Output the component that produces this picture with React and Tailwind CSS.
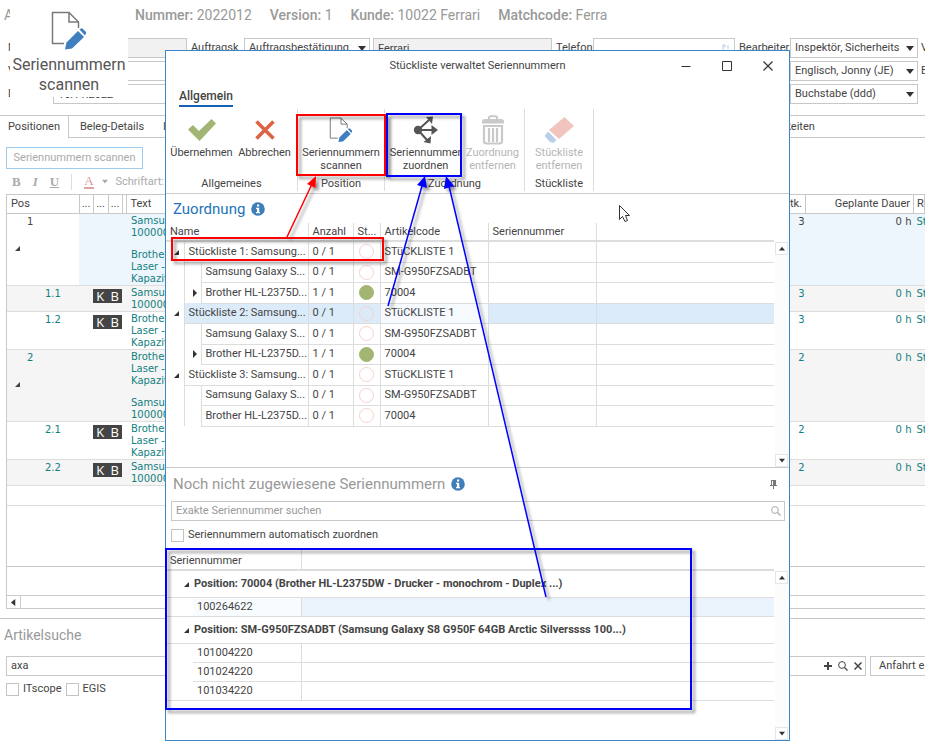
import React from 'react';
import clsx from 'clsx';

const positions = [
    { pos: '1', group: true, active: true, qty: '3', text: [['Samsung', '1000002'], ['Brother', 'Laser - A4', 'Kapazität']] },
    { pos: '1.1', qty: '3', shaded: true, text: [['Samsung', '1000002']] },
    { pos: '1.2', qty: '3', text: [['Brother', 'Laser - A4', 'Kapazität']] },
    { pos: '2', group: true, shaded: true, qty: '2', text: [['Brother', 'Laser - A4', 'Kapazität'], ['Samsung', '1000002']] },
    { pos: '2.1', qty: '2', text: [['Brother', 'Laser - A4', 'Kapazität']] },
    { pos: '2.2', qty: '2', shaded: true, text: [['Samsung', '1000002']] },
];

const assignments = [
    { name: 'Stückliste 1: Samsung...', level: 0, count: '0 / 1', code: 'STüCKLISTE 1' },
    { name: 'Samsung Galaxy S...', level: 1, count: '0 / 1', code: 'SM-G950FZSADBT' },
    { name: 'Brother HL-L2375D...', level: 1, count: '1 / 1', code: '70004', done: true },
    { name: 'Stückliste 2: Samsung...', level: 0, count: '0 / 1', code: 'STüCKLISTE 1', selected: true },
    { name: 'Samsung Galaxy S...', level: 1, count: '0 / 1', code: 'SM-G950FZSADBT' },
    { name: 'Brother HL-L2375D...', level: 1, count: '1 / 1', code: '70004', done: true },
    { name: 'Stückliste 3: Samsung...', level: 0, count: '0 / 1', code: 'STüCKLISTE 1' },
    { name: 'Samsung Galaxy S...', level: 1, count: '0 / 1', code: 'SM-G950FZSADBT' },
    { name: 'Brother HL-L2375D...', level: 1, count: '0 / 1', code: '70004' },
];

const serialGroups = [
    { title: 'Position: 70004 (Brother HL-L2375DW - Drucker - monochrom - Duplex ...)', serials: ['100264622'] },
    { title: 'Position: SM-G950FZSADBT (Samsung Galaxy S8 G950F 64GB Arctic Silverssss 100...)', serials: ['101004220', '101024220', '101034220'] },
];

/* ---------- icons ---------- */

function DocEditIcon({ className }) {
    return (
        <svg viewBox="0 0 36 40" className={className} fill="none">
            <path d="M13 32.500H1.500V1.500H18L27.500 11V17" stroke="#7a7a7a" strokeWidth="1.500" />
            <path d="M18 1.500V11H27.500" stroke="#7a7a7a" strokeWidth="1.500" />
            <path d="M14 38.500L15.500 31.500L27 20L33 26L21 37.500Z" fill="#3f7fbf" />
            <path d="M28.500 18.500L30 17.500Q31 17 32 18L34.500 20.500Q35.500 21.500 35 22.500L34 24.500Z" fill="#3f7fbf" />
        </svg>
    );
}

function CheckMark() {
    return (
        <svg viewBox="0 0 28 22" className="w-7 h-[22px]">
            <path d="M0 10.500L5 6L11 12L23.500 0L28 4.500L11.500 22Z" fill="#a3b572" />
        </svg>
    );
}

function CrossMark() {
    return (
        <svg viewBox="0 0 20 20" className="w-5 h-5">
            <path d="M1.500 1.500L18.500 18.500M18.500 1.500L1.500 18.500" stroke="#dc6344" strokeWidth="3.600" />
        </svg>
    );
}

function AssignIcon() {
    return (
        <svg viewBox="0 0 26 28" className="w-[26px] h-7" stroke="#555" fill="#555">
            <circle cx="5" cy="14" r="4.200" stroke="none" />
            <path d="M5 14L16 4M5 14H20M5 14L14 24" strokeWidth="2" />
            <path d="M13 1L20 0.500L19 8Z M18.500 9L25 14L18.500 19Z M18 20L17.500 27.500L10.500 26Z" stroke="none" />
        </svg>
    );
}

function TrashIcon() {
    return (
        <svg viewBox="0 0 24 30" className="w-6 h-[30px]" fill="none" stroke="#c9c9c9">
            <path d="M8 4V2.500Q8 1.200 9.500 1.200H14.500Q16 1.200 16 2.500V4" strokeWidth="2" />
            <path d="M1 8.500V6.500Q1 4 4 4H20Q23 4 23 6.500V8.500Z" fill="#c9c9c9" stroke="none" />
            <path d="M3 11V26Q3 28.500 5.500 28.500H18.500Q21 28.500 21 26V11Z" strokeWidth="2.200" />
            <path d="M8 13V27M12 13V27M16 13V27" strokeWidth="2.200" />
        </svg>
    );
}

function EraserIcon() {
    return (
        <svg viewBox="0 0 30 26" className="w-[30px] h-[26px]">
            <path d="M20.500 0L30 9L15 22L5 13Z" fill="#f1c5bd" />
            <path d="M4 14.500L12.500 23L9.500 26L6 25L0.500 19Z" fill="#b9d0ea" />
        </svg>
    );
}

function InfoIcon() {
    return (
        <svg viewBox="0 0 14 14" className="w-[14px] h-[14px]">
            <circle cx="7" cy="7" r="6.800" fill="#3f7fb9" />
            <path d="M6 2.500H8.200V4.500H6ZM5 5.700H8.200V10H9V11.200H5V10H6V6.900H5Z" fill="#fff" />
        </svg>
    );
}

function SearchIcon({ className }) {
    return (
        <svg viewBox="0 0 10 10" className={clsx('w-[10px] h-[10px]', className)} fill="none" stroke="currentColor">
            <circle cx="4" cy="4" r="3.400" />
            <path d="M6.500 6.500L9.500 9.500" strokeWidth="1.300" />
        </svg>
    );
}

function PhoneIcon() {
    return (
        <svg viewBox="0 0 8 9" className="w-2 h-[9px]" fill="none" stroke="#b9cbe3">
            <path d="M1 1V5Q1.500 8 4 8.500M1 1H3V3.500M5 2H7M5 4H7" />
        </svg>
    );
}

function PinIcon() {
    return (
        <svg viewBox="0 0 7 9" className="w-[7px] h-[9px]">
            <path d="M1 0H6V5H7V6H4V9H3V6H0V5H1Z" fill="#777" />
            <path d="M2 1H3V5H2Z" fill="#fff" />
        </svg>
    );
}

function Triangle({ dir, className }) {
    const shapes = {
        down: 'M0 1H8L4 6Z',
        up: 'M0 6H8L4 1Z',
        left: 'M6 0V8L1 4Z',
        right: 'M2 0V8L6 4Z',
        open: 'M7 2V7H2Z',
    };
    return (
        <svg viewBox="0 0 8 8" className={clsx('w-2 h-2', className)}>
            <path d={shapes[dir]} fill="currentColor" />
        </svg>
    );
}

/* ---------- shared controls ---------- */

function Dropdown({ label, value, className }) {
    return (
        <div className={clsx('relative shrink-0', className)}>
            <select aria-label={label} className="appearance-none w-full h-5 pl-1 pr-4 border border-[#c8c8c8] bg-white">
                <option>{value}</option>
            </select>
            <Triangle dir="down" className="absolute right-[4px] top-[7px] text-[#333] pointer-events-none" />
        </div>
    );
}

function Checkbox({ id, label }) {
    return (
        <div className="flex items-center gap-1">
            <input id={id} type="checkbox" className="appearance-none w-[13px] h-[13px] border border-[#c4c4c4] bg-white" />
            <label htmlFor={id}>{label}</label>
        </div>
    );
}

function ScrollBar() {
    return (
        <div className="w-[13px] shrink-0 flex flex-col justify-between bg-[#fcfcfc]">
            <button aria-label="Nach oben" className="h-[13px] flex items-center justify-center border border-[#e6e6e6] bg-white text-[#333]">
                <Triangle dir="up" className="w-[6px] h-[6px]" />
            </button>
            <button aria-label="Nach unten" className="h-[13px] flex items-center justify-center border border-[#e6e6e6] bg-white text-[#333]">
                <Triangle dir="down" className="w-[6px] h-[6px]" />
            </button>
        </div>
    );
}

/* ---------- document window in the background ---------- */

function DocumentHeader() {
    const facts = [
        ['Nummer:', '2022012'],
        ['Version:', '1'],
        ['Kunde:', '10022 Ferrari'],
        ['Matchcode:', 'Ferra'],
    ];
    return (
        <header className="h-[38px] pt-1 pl-1 flex text-[14px] leading-[22px] text-[#999] whitespace-nowrap">
            <h1 className="w-[131px]">A</h1>
            <div className="flex gap-[18px]">
                {facts.map(([name, value]) => (
                    <span key={name}><b className="font-medium">{name}</b> {value}</span>
                ))}
            </div>
        </header>
    );
}

function DocumentForm() {
    const field = 'h-5 px-1 border border-[#c8c8c8] min-w-0';
    return (
        <form className="h-[78px] pl-2 flex flex-col gap-[3px] border-b border-[#c8c8c8] whitespace-nowrap">
            <div className="flex items-center">
                <label htmlFor="number" className="w-[45px]">Nr.</label>
                <input id="number" readOnly className={clsx(field, 'w-[134px] bg-[#f1f1f1]')} />
                <span className="w-[53px] ml-1">Auftragsk.</span>
                <Dropdown label="Auftragsklasse" value="Auftragsbestätigung" className="w-[126px]" />
                <input aria-label="Kunde" readOnly defaultValue="Ferrari" className={clsx(field, 'flex-1 ml-[3px] bg-[#f1f1f1]')} />
                <label htmlFor="phone" className="w-[37px] ml-1">Telefon</label>
                <div className={clsx(field, 'w-[142px] flex items-center')}>
                    <input id="phone" className="flex-1 min-w-0" />
                    <PhoneIcon />
                </div>
                <span className="w-[51px] ml-1">Bearbeiter</span>
                <Dropdown label="Bearbeiter" value="Inspektör, Sicherheits (" className="w-[128px]" />
                <span className="w-[4px] ml-[3px]">V</span>
            </div>
            <div className="flex items-center">
                <label htmlFor="variant" className="w-[45px]">Von</label>
                <input id="variant" className={clsx(field, 'flex-1')} />
                <Dropdown label="Vertreter" value="Englisch, Jonny (JE)" className="w-[128px] ml-[60px]" />
                <span className="w-[4px] ml-[3px]">E</span>
            </div>
            <div className="flex items-center">
                <label htmlFor="date" className="w-[45px]">Datum</label>
                <input id="date" defaultValue="15.11.2022" className={clsx(field, 'flex-1')} />
                <Dropdown label="Gruppe" value="Buchstabe (ddd)" className="w-[128px] ml-[60px] mr-[7px]" />
            </div>
        </form>
    );
}

function DocumentTabs() {
    return (
        <nav className="h-[22px] flex">
            <button className="w-[68px] pl-2 text-left">Positionen</button>
            <button className="w-[87px] pl-[11px] border-l border-b border-[#c8c8c8] text-left">Beleg-Details</button>
            <button className="flex-1 pl-2 border-b border-[#c8c8c8] text-left">Infos</button>
            <button className="w-[165px] pl-px border-b border-[#c8c8c8] text-left">Tätigkeiten</button>
        </nav>
    );
}

function FormatBar() {
    return (
        <div className="h-[25px] pl-3 flex items-center gap-3 text-[#aaa]">
            <button className="font-[Liberation_Serif,serif] text-[13px] font-bold">B</button>
            <button className="font-[Liberation_Serif,serif] text-[13px] font-bold italic">I</button>
            <button className="font-[Liberation_Serif,serif] text-[13px] font-bold underline">U</button>
            <span className="w-px h-4 bg-[#ddd]" />
            <button className="flex items-center gap-2">
                <span className="font-[Liberation_Serif,serif] text-[13px] leading-[12px] border-b-2 border-[#e0a3a3] text-[#d99]">A</span>
                <Triangle dir="down" className="w-[6px] h-[6px]" />
            </button>
            <label htmlFor="font" className="-ml-1">Schriftart:</label>
            <input id="font" className="-ml-2 h-5 w-40 border border-[#ddd]" />
        </div>
    );
}

function PositionsTable() {
    const head = 'h-[18px] border-r border-[#c8c8c8] font-normal overflow-hidden whitespace-nowrap';
    return (
        <table className="w-full table-fixed border-collapse">
            <colgroup>
                <col className="w-[72px]" />
                <col className="w-[14px]" />
                <col className="w-[15px]" />
                <col className="w-[14px]" />
                <col className="w-[4px]" />
                <col />
                <col className="w-[60px]" />
                <col className="w-[108px]" />
                <col className="w-[11px]" />
            </colgroup>
            <thead>
                <tr className="border-b border-[#c8c8c8]">
                    <th className={clsx(head, 'pl-1 text-left')}>Pos</th>
                    <th className={head}>...</th>
                    <th className={head}>...</th>
                    <th className={head}>...</th>
                    <th className={head} />
                    <th className={clsx(head, 'pl-1 text-left')}>Text</th>
                    <th className={clsx(head, 'pr-[3px] text-right')}>Stk.</th>
                    <th className={clsx(head, 'pr-[3px] text-right')}>Geplante Dauer</th>
                    <th className={clsx(head, 'pl-[3px] text-left')}>Re</th>
                </tr>
            </thead>
            <tbody className="font-[DejaVu_Sans,sans-serif] text-[10px] leading-[12px] text-[#128080]">
                {positions.map((row) => {
                    const tint = row.active ? 'bg-[#eef6fd]' : '';
                    return (
                        <tr key={row.pos} className={clsx('border-b border-[#ddd] align-top', row.shaded && 'bg-[#f5f5f5]')}>
                            <td className={clsx('pt-[2px]', row.group ? 'pl-5' : 'pl-[38px]', row.active && 'text-[#444]')}>
                                {row.pos}
                                {row.group && <Triangle dir="open" className="-ml-[14px] mt-4 text-[#444]" />}
                            </td>
                            <td className={tint} />
                            <td className={tint} colSpan={3}>
                                {!row.group && (
                                    <span className="flex justify-around w-[29px] h-[14px] mt-[3px] bg-[#444] text-white text-[13px] leading-[14px] font-[Open_Sans,sans-serif]">
                                        <span>K</span><span>B</span>
                                    </span>
                                )}
                            </td>
                            <td className={clsx(tint, 'pt-px pl-[5px] overflow-hidden whitespace-nowrap')}>
                                {row.text.map((lines, i) => (
                                    <div key={i} className="not-first:mt-[10px]">
                                        {lines.map((line) => <div key={line}>{line}</div>)}
                                    </div>
                                ))}
                            </td>
                            <td className={clsx(tint, 'pt-[2px] pr-px text-right', row.active && 'text-[#444]')}>{row.qty}</td>
                            <td className={clsx(tint, 'pt-[2px] pr-[2px] text-right', row.active && 'text-[#444]')}>0 h</td>
                            <td className={clsx(tint, 'pt-[2px] pl-[3px] overflow-hidden')}>St</td>
                        </tr>
                    );
                })}
                <tr className="h-5 border-b border-[#ddd]"><td colSpan={9} /></tr>
            </tbody>
        </table>
    );
}

function ArticleSearch() {
    return (
        <section className="mt-[9px] border-t border-[#c8c8c8] whitespace-nowrap">
            <h2 className="pl-1 pt-[5px] pb-[10px] text-[14px] leading-[22px] text-[#999]">Artikelsuche</h2>
            <div className="pl-[6px] flex gap-1">
                <div className="flex-1 h-5 flex items-center gap-[6px] pr-[3px] border border-[#c8c8c8] text-[#444]">
                    <input aria-label="Artikelsuche" defaultValue="axa" className="flex-1 min-w-0 pl-1 outline-none" />
                    <button aria-label="Hinzufügen">
                        <svg viewBox="0 0 8 8" className="w-2 h-2"><path d="M4 0V8M0 4H8" stroke="currentColor" strokeWidth="2" /></svg>
                    </button>
                    <button aria-label="Suchen"><SearchIcon /></button>
                    <button aria-label="Leeren">
                        <svg viewBox="0 0 8 8" className="w-2 h-2"><path d="M0.500 0.500L7.500 7.500M7.500 0.500L0.500 7.500" stroke="currentColor" strokeWidth="1.500" /></svg>
                    </button>
                </div>
                <button className="w-[55px] h-5 pl-2 border border-r-0 border-[#c8c8c8] text-left overflow-hidden">Anfahrt e</button>
            </div>
            <div className="pl-[6px] pt-[6px] flex gap-1">
                <Checkbox id="itscope" label="ITscope" />
                <Checkbox id="egis" label="EGIS" />
            </div>
        </section>
    );
}

/* ---------- dialog ---------- */

function RibbonButton({ icon, lines, disabled, className }) {
    return (
        <button disabled={disabled} className={clsx('flex flex-col items-center whitespace-nowrap', disabled && 'text-[#b5b5b5]', className)}>
            <span className="h-8 flex items-center">{icon}</span>
            {lines.map((line) => <span key={line} className="leading-[13px]">{line}</span>)}
        </button>
    );
}

function RibbonGroup({ title, children, className }) {
    return (
        <div className={clsx('flex flex-col items-center justify-between border-r border-[#ddd]', className)}>
            <div className="flex pt-[5px]">{children}</div>
            <span className="leading-[14px]">{title}</span>
        </div>
    );
}

function Ribbon() {
    return (
        <div className="h-[87px] pt-[2px] pb-[2px] border-b border-[#ccc] flex">
            <RibbonGroup title="Allgemeines" className="w-[132px]">
                <RibbonButton icon={<CheckMark />} lines={['Übernehmen']} className="w-[66px]" />
                <RibbonButton icon={<CrossMark />} lines={['Abbrechen']} className="w-[60px]" />
            </RibbonGroup>
            <RibbonGroup title="Position" className="w-[87px]">
                <RibbonButton icon={<DocEditIcon className="w-6 h-[26px]" />} lines={['Seriennummern', 'scannen']} />
            </RibbonGroup>
            <RibbonGroup title="Zuordnung" className="w-[140px]">
                <RibbonButton icon={<AssignIcon />} lines={['Seriennummer', 'zuordnen']} className="w-[76px]" />
                <RibbonButton icon={<TrashIcon />} lines={['Zuordnung', 'entfernen']} disabled className="w-[58px]" />
            </RibbonGroup>
            <RibbonGroup title="Stückliste" className="w-[69px]">
                <RibbonButton icon={<EraserIcon />} lines={['Stückliste', 'entfernen']} disabled />
            </RibbonGroup>
        </div>
    );
}

function AssignmentTable() {
    const line = 'border-r border-[#ddd]';
    return (
        <table className="w-full table-fixed border-collapse whitespace-nowrap">
            <colgroup>
                <col className="w-[18px]" />
                <col className="w-[17px]" />
                <col className="w-[107px]" />
                <col className="w-[45px]" />
                <col className="w-[27px]" />
                <col className="w-[108px]" />
                <col className="w-[108px]" />
                <col />
            </colgroup>
            <thead>
                <tr className="h-[18px] border-b-2 border-[#ddd] text-left">
                    <th colSpan={3} className={clsx(line, 'pl-1 font-normal')}>Name</th>
                    <th className={clsx(line, 'pl-1 font-normal')}>Anzahl</th>
                    <th className={clsx(line, 'pl-1 font-normal')}>St...</th>
                    <th className={clsx(line, 'pl-1 font-normal')}>Artikelcode</th>
                    <th className={clsx(line, 'pl-1 font-normal')}>Seriennummer</th>
                    <th />
                </tr>
            </thead>
            <tbody>
                {assignments.map((row, i) => {
                    const cell = clsx(line, 'border-b pl-1', row.selected && 'bg-[#dcebf9]');
                    return (
                        <tr key={i} className="odd:h-[21px] even:h-5">
                            <td className="border-r border-[#ddd]">
                                {row.level === 0 && <Triangle dir="open" className="ml-[6px] text-[#333]" />}
                            </td>
                            {row.level === 1 && (
                                <td className="border-r border-[#ddd]">
                                    {row.done && <Triangle dir="right" className="ml-[6px] text-[#333]" />}
                                </td>
                            )}
                            <td colSpan={row.level === 0 ? 2 : 1} className={cell}>{row.name}</td>
                            <td className={cell}>{row.count}</td>
                            <td className={clsx(line, 'border-b', row.selected && 'bg-[#dcebf9]')}>
                                <span className={clsx('block mx-auto w-[15px] h-[15px] rounded-full border', row.done ? 'bg-[#a3b572] border-[#a3b572]' : 'border-[#f3d3cc]')} />
                            </td>
                            <td className={clsx(line, 'border-b pl-1', row.selected && 'bg-[#f6fafe]')}>{row.code}</td>
                            <td className={cell} />
                            <td className={clsx('border-b border-[#ddd]', row.selected && 'bg-[#dcebf9]')} />
                        </tr>
                    );
                })}
            </tbody>
        </table>
    );
}

function SerialTable() {
    return (
        <table className="w-full table-fixed border-collapse whitespace-nowrap">
            <colgroup>
                <col className="w-[27px]" />
                <col className="w-[108px]" />
                <col />
            </colgroup>
            <thead>
                <tr className="h-[21px] border-b-2 border-[#ddd] text-left">
                    <th colSpan={2} className="pl-1 pt-1 font-normal border-r border-[#ddd]">Seriennummer</th>
                    <th />
                </tr>
            </thead>
            {serialGroups.map((group, g) => (
                <tbody key={group.title}>
                    <tr className="h-[27px] border-b border-[#ddd]">
                        <th colSpan={3} className="pl-4 text-left font-bold">
                            <span className="flex items-center gap-1"><Triangle dir="open" className="text-[#333]" />{group.title}</span>
                        </th>
                    </tr>
                    {group.serials.map((serial) => (
                        <tr key={serial} className="h-[19px] last:border-b border-[#ddd]">
                            <td />
                            <td className={clsx('pl-1 border-r border-b border-[#ddd]', g === 0 && 'bg-[#f8fcff]')}>{serial}</td>
                            <td className={clsx('border-b border-[#ddd]', g === 0 && 'bg-[#ebf4fd]')} />
                        </tr>
                    ))}
                </tbody>
            ))}
        </table>
    );
}

function SerialDialog() {
    return (
        <div role="dialog" aria-labelledby="dialog-title" className="absolute left-[165px] right-[135px] top-[50px] bg-white border border-[#3a87c8] flex flex-col">
            <div className="h-[30px] grid grid-cols-[1fr_auto_1fr] items-center">
                <h2 id="dialog-title" className="col-start-2">Stückliste verwaltet Seriennummern</h2>
                <div className="flex justify-end gap-[31px] pr-4 text-[#333]">
                    <button aria-label="Minimieren">
                        <svg viewBox="0 0 10 10" className="w-[10px] h-[10px]"><path d="M0.500 5.500H9.500" stroke="currentColor" /></svg>
                    </button>
                    <button aria-label="Maximieren">
                        <svg viewBox="0 0 10 10" className="w-[10px] h-[10px]"><path d="M0.500 0.500H9.500V9.500H0.500Z" stroke="currentColor" fill="none" /></svg>
                    </button>
                    <button aria-label="Schließen">
                        <svg viewBox="0 0 10 10" className="w-[10px] h-[10px]"><path d="M0.500 0.500L9.500 9.500M9.500 0.500L0.500 9.500" stroke="currentColor" strokeWidth="1.200" /></svg>
                    </button>
                </div>
            </div>

            <div className="h-[26px] pl-[13px] flex items-end">
                <button className="h-5 border-b-2 border-[#1461b5] text-[12px] font-medium">Allgemein</button>
            </div>

            <Ribbon />

            <section className="h-[274px] border-b border-[#ccc] flex flex-col">
                <h3 className="h-[29px] pl-[7px] flex items-center gap-[6px] text-[15px] text-[#2273b9]">Zuordnung <InfoIcon /></h3>
                <div className="flex-1 flex">
                    <div className="flex-1 min-w-0"><AssignmentTable /></div>
                    <div className="pt-[19px] pl-px pr-px flex"><ScrollBar /></div>
                </div>
            </section>

            <section className="pt-1">
                <div className="flex items-center justify-between pl-[7px] pr-3">
                    <h3 className="h-6 flex items-center gap-[6px] text-[15px] text-[#999]">Noch nicht zugewiesene Seriennummern <InfoIcon /></h3>
                    <button aria-label="Anheften"><PinIcon /></button>
                </div>
                <div className="mt-[5px] ml-[5px] mr-1 h-5 flex items-center pr-[3px] border border-[#c8c8c8]">
                    <input aria-label="Seriennummer suchen" placeholder="Exakte Seriennummer suchen" className="flex-1 pl-1 outline-none placeholder:text-[#999]" />
                    <SearchIcon className="text-[#aaa]" />
                </div>
                <div className="h-7 pl-[5px] flex items-center">
                    <Checkbox id="auto-assign" label="Seriennummern automatisch zuordnen" />
                </div>
                <div className="h-[191px] flex">
                    <div className="flex-1 min-w-0"><SerialTable /></div>
                    <div className="pt-[22px] pl-px pr-px flex"><ScrollBar /></div>
                </div>
            </section>
        </div>
    );
}

/* ---------- callouts drawn over the windows ---------- */

function Callouts() {
    return (
        <>
            <div className="absolute left-[10px] top-[9px] w-[118px] h-[88px] pt-[2px] bg-white flex flex-col items-center text-[16px] leading-5 text-[#555]">
                <DocEditIcon className="w-9 h-10 mb-1" />
                <span>Seriennummern</span>
                <span>scannen</span>
            </div>
            <svg className="absolute left-0 top-0 w-[925px] h-[752px] pointer-events-none" viewBox="0 0 925 752" fill="none" strokeWidth="2">
                <defs>
                    <filter id="shade" filterUnits="userSpaceOnUse" x="0" y="0" width="925" height="752">
                        <feDropShadow dx="3" dy="3" stdDeviation="1.500" floodColor="#000" floodOpacity="0.400" />
                    </filter>
                </defs>
                <g filter="url(#shade)">
                    <g stroke="#f00">
                        <rect x="297" y="115" width="88" height="60" />
                        <rect x="172" y="238" width="211" height="22" />
                        <path d="M287 237L312 184" strokeWidth="1.500" />
                        <path d="M316 176L315.500 188L307 184Z" fill="#f00" stroke="none" />
                    </g>
                    <g stroke="#00f">
                        <rect x="387" y="114" width="74" height="62" />
                        <rect x="166" y="549" width="525" height="160" />
                        <path d="M388 306L422 186" strokeWidth="1.500" />
                        <path d="M546 597L449 186" strokeWidth="1.500" />
                        <path d="M425 176L427 188L417 185Z" fill="#00f" stroke="none" />
                        <path d="M446 176L454 186L444 189Z" fill="#00f" stroke="none" />
                    </g>
                </g>
                <path d="M619.500 205.500V219.500L622.500 216.500L625 221.500L627.500 220.500L625.500 215.500H629.500Z" fill="#fff" stroke="#333" strokeWidth="1" />
            </svg>
        </>
    );
}

function App() {
    return (
        <div className="relative min-h-screen overflow-hidden bg-white text-[#444] text-[11px] leading-[14px] font-[Roboto,sans-serif]">
            <DocumentHeader />
            <DocumentForm />
            <DocumentTabs />
            <div className="pt-[9px] pl-[6px]">
                <button className="h-[22px] w-[137px] border border-[#9ccbee] text-[#aaa] whitespace-nowrap">Seriennummern scannen</button>
            </div>
            <FormatBar />
            <div className="ml-[6px] h-[415px] border border-r-0 border-[#c8c8c8] flex flex-col">
                <div className="flex-1"><PositionsTable /></div>
                <div className="h-[29px] border-t border-[#c8c8c8]" />
                <div className="h-[13px] border-t border-[#ccc] flex">
                    <button aria-label="Nach links" className="w-[14px] flex items-center justify-center border-r border-[#ccc] text-[#333]">
                        <Triangle dir="left" className="w-[7px] h-[7px]" />
                    </button>
                </div>
            </div>
            <ArticleSearch />
            <SerialDialog />
            <Callouts />
        </div>
    );
}

export default App;
